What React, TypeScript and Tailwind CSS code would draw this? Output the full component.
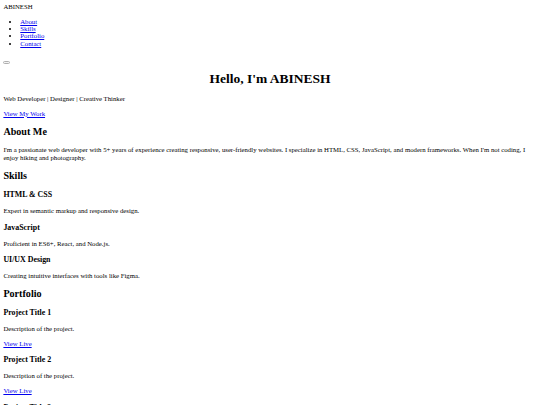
export default function App() {
  const skills = [
    { title: "HTML & CSS", text: "Expert in semantic markup and responsive design." },
    { title: "JavaScript", text: "Proficient in ES6+, React, and Node.js." },
    { title: "UI/UX Design", text: "Creating intuitive interfaces with tools like Figma." },
  ];
  const projects = ["Project Title 1", "Project Title 2", "Project Title 3"];

  const link = "text-[#0000ee] underline";
  const p = "my-[6.75px]";
  const h2 = "text-[10.125px] leading-[11.64px] font-bold my-[8.4px]";
  const h3 = "text-[7.9px] leading-[9.08px] font-bold my-[7.9px]";

  return (
    <div className="p-[3.375px] font-['Liberation_Serif','Times_New_Roman',serif] text-[6.75px] leading-[7.76px] text-black bg-white">
      <header>
        <div>ABINESH</div>
        <nav>
          <ul className="list-disc pl-[16.875px] mt-[6.5px] mb-[6.75px] leading-[7.35px]">
            <li><a href="#about" className={link}>About</a></li>
            <li><a href="#skills" className={link}>Skills</a></li>
            <li><a href="#portfolio" className={link}>Portfolio</a></li>
            <li><a href="#contact" className={link}>Contact</a></li>
          </ul>
        </nav>
        {/* menu toggle, empty */}
        <button className="block mt-[13.5px] border border-[#b0b0b0] bg-[#f2f2f2] rounded-[1.5px] w-[7px] h-[3px]" />
      </header>

      <section id="home">
        <h1 className="text-[13.5px] leading-[15.53px] font-bold mt-[7.2px] mb-[9.05px] text-center">Hello, I'm ABINESH</h1>
        <p className={p}>Web Developer | Designer | Creative Thinker</p>
        <a href="#portfolio" className={link}>View My Work</a>
      </section>

      <section id="about">
        <h2 className={h2}>About Me</h2>
        <p className={p}>
          I'm a passionate web developer with 5+ years of experience creating responsive, user-friendly
          websites. I specialize in HTML, CSS, JavaScript, and modern frameworks. When I'm not coding, I
          enjoy hiking and photography.
        </p>
      </section>

      <section id="skills">
        <h2 className={h2}>Skills</h2>
        {skills.map((s) => (
          <div key={s.title}>
            <h3 className={h3}>{s.title}</h3>
            <p className={p}>{s.text}</p>
          </div>
        ))}
      </section>

      <section id="portfolio">
        <h2 className={h2}>Portfolio</h2>
        {projects.map((t) => (
          <div key={t}>
            <h3 className={h3}>{t}</h3>
            <p className={p}>Description of the project.</p>
            <a href="#" className={link}>View Live</a>
          </div>
        ))}
      </section>
    </div>
  );
}
